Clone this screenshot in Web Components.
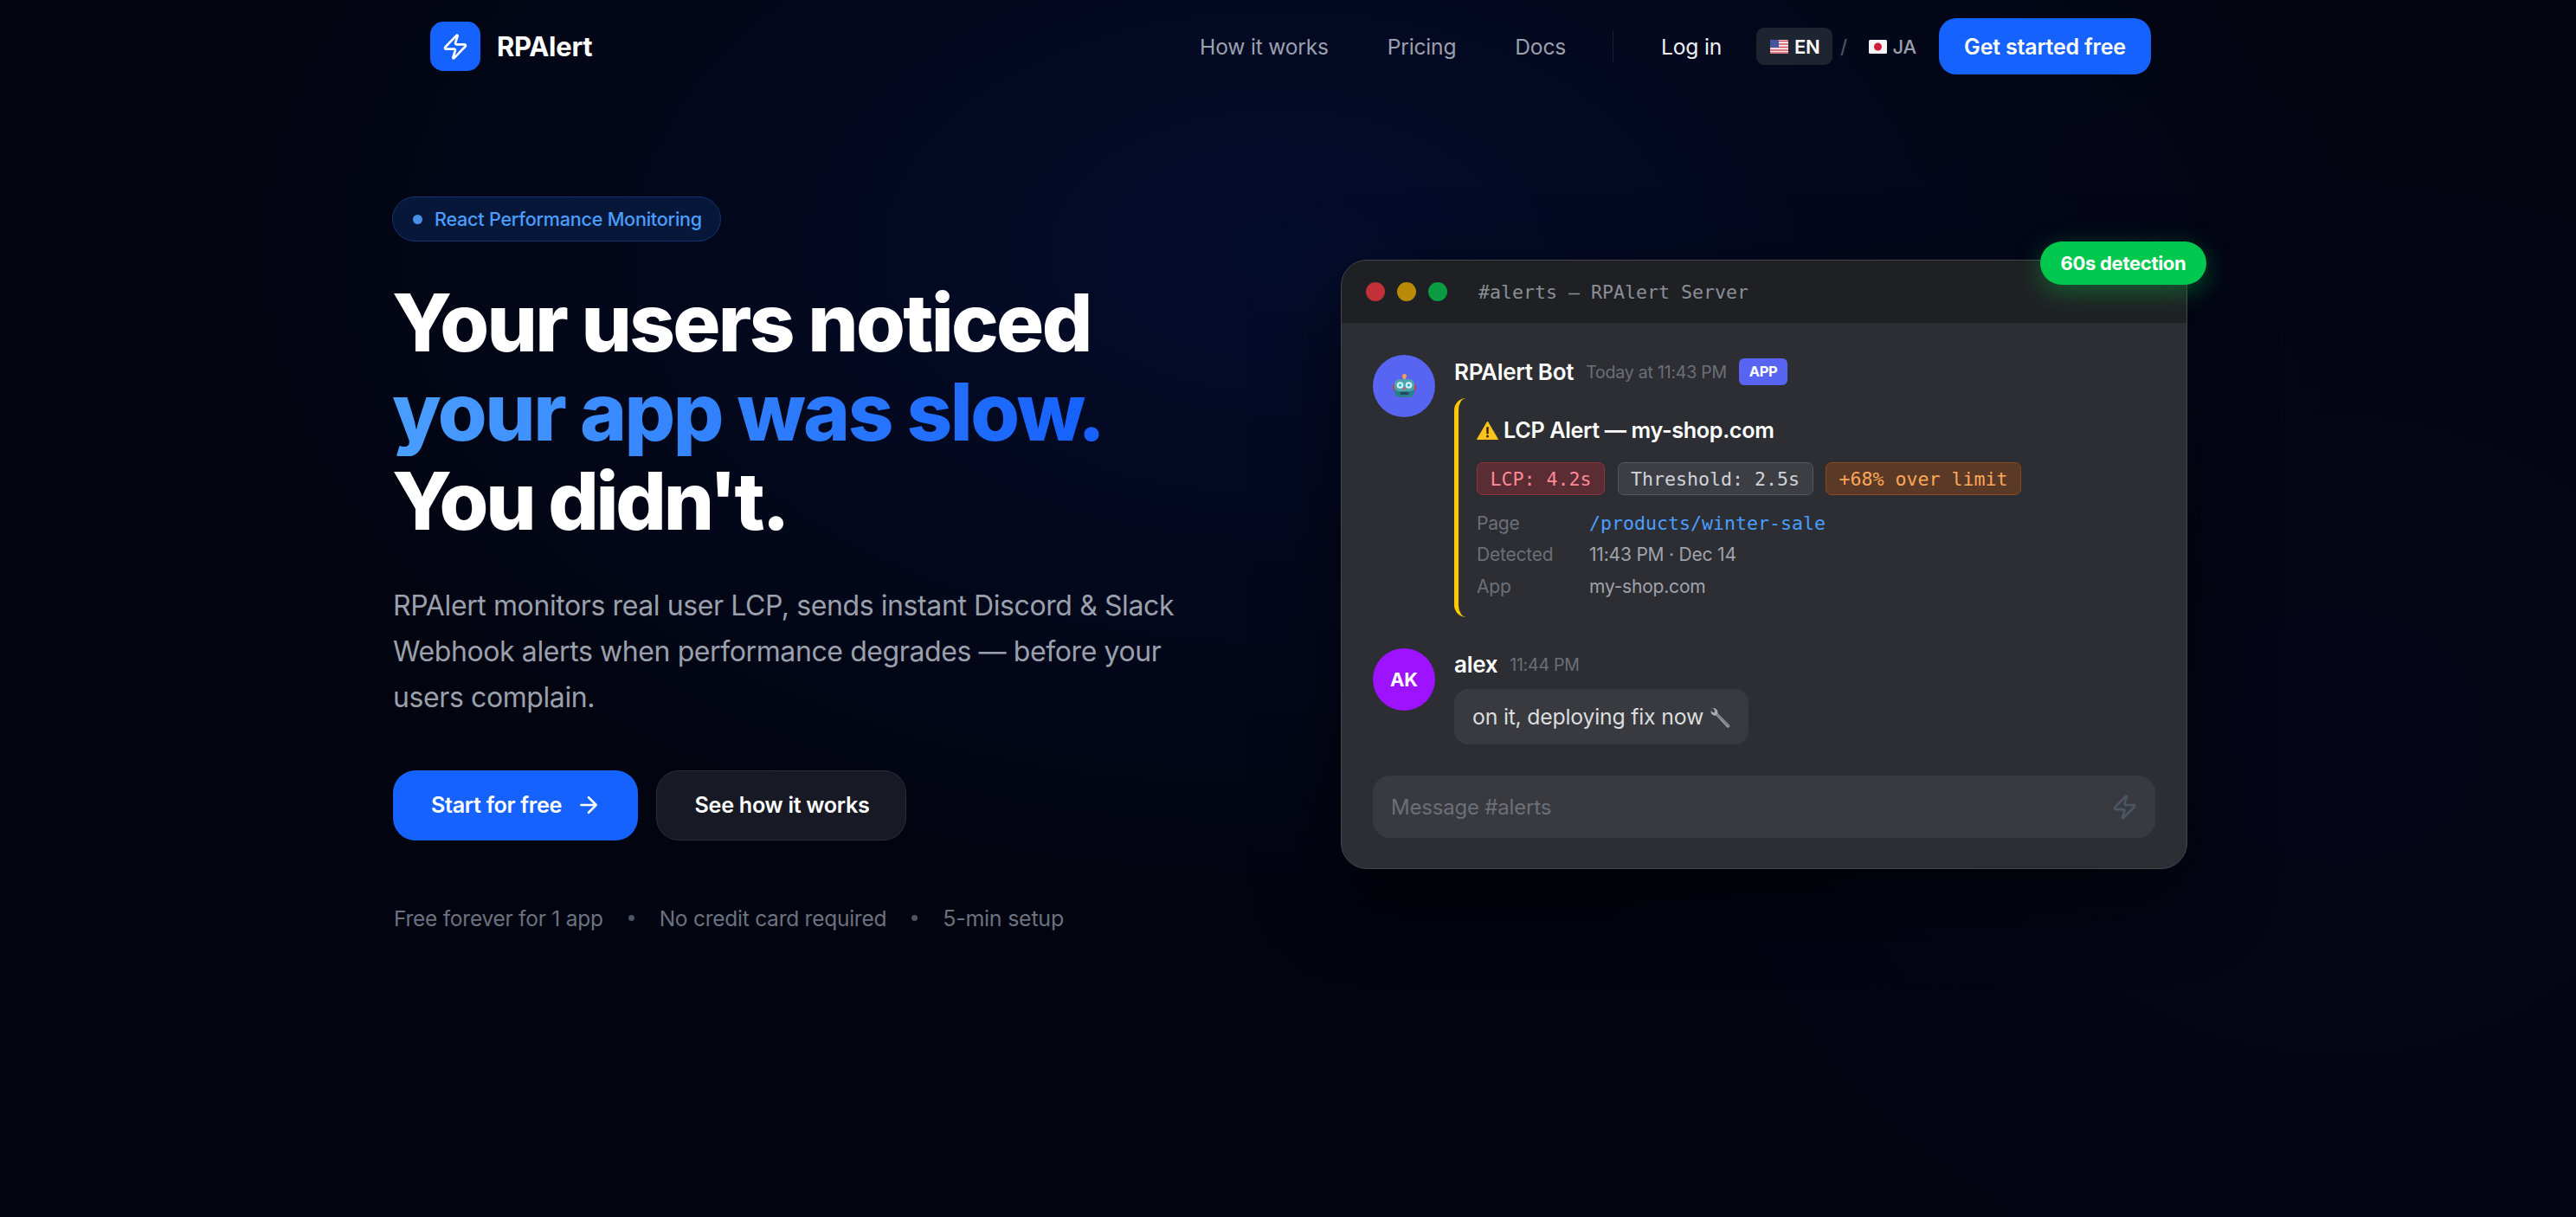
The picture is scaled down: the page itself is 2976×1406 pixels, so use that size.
<!DOCTYPE html>
<html lang="en"><head><meta charset="utf-8"><title>RPAlert</title>
<style>
html,body{margin:0;padding:0;height:100%}
body{min-height:1406px;overflow:hidden;color:#fff;font-family:Inter,"Noto Sans",sans-serif;
background:
 radial-gradient(1250px 760px at 1480px 290px,rgba(8,28,100,.34),rgba(8,30,110,0) 100%),
 radial-gradient(900px 800px at 2700px 850px,rgba(30,10,70,.16),rgba(30,10,70,0) 100%),
 #02040f;}
</style></head><body>
<rp-nav></rp-nav>
<rp-hero></rp-hero>
<script>
const ZAP='M4 14a1 1 0 0 1-.78-1.63l9.9-10.2a.5.5 0 0 1 .86.46l-1.92 6.02A1 1 0 0 0 13 10h7a1 1 0 0 1 .78 1.63l-9.9 10.2a.5.5 0 0 1-.86-.46l1.92-6.02A1 1 0 0 0 11 14z';
function def(name,html){customElements.define(name,class extends HTMLElement{constructor(){super();this.attachShadow({mode:'open'}).innerHTML=html;}})}

def('rp-nav',`<style>
:host{display:flex;align-items:center;height:107px;box-sizing:border-box;padding:0 491px 0 497px;font-size:24.6px;letter-spacing:-.2px}
.logo{display:flex;align-items:center;gap:19px;font-size:31px;font-weight:700;letter-spacing:-.3px}
.mark{width:58px;height:57px;border-radius:15px;background:#1662ff;display:flex;align-items:center;justify-content:center}
.links{margin-left:auto;display:flex;align-items:center;gap:68px;color:#9aa0ac}
.div{width:1px;height:36px;background:#1b2030;margin:0 55px 0 54px}
.login{color:#eef0f4}
.lang{display:flex;align-items:center;margin-left:40px;font-size:22px;font-weight:500;width:185px}
.opt{display:flex;align-items:center;gap:7px;height:43px;border-radius:9px;box-sizing:border-box}
.opt svg{width:21px;height:16px;display:block;flex:none}
.opt.on{background:#1e2430;color:#fff;font-weight:600;width:88px;padding-left:16px}
.opt.off{color:#9aa0ac;margin-left:auto}
.sl{color:#4b5563;margin-left:9px}
.cta{margin-left:26px;height:65px;width:245px;border-radius:20px;background:#1662ff;color:#fff;font-weight:600;display:flex;align-items:center;justify-content:center;font-size:25px}
svg.z{width:32px;height:32px;fill:none;stroke:#fff;stroke-width:2;stroke-linecap:round;stroke-linejoin:round}
</style>
<div class="logo"><div class="mark"><svg class="z" viewBox="0 0 24 24"><path d="${ZAP}"/></svg></div><span>RPAlert</span></div>
<div class="links"><span>How it works</span><span>Pricing</span><span>Docs</span></div>
<div class="div"></div><span class="login">Log in</span>
<div class="lang">
<div class="opt on"><svg viewBox="0 0 21 16"><rect width="21" height="16" rx="1.5" fill="#f3eef0"/><path d="M0 1.5h21M0 5h21M0 8.500h21M0 12h21M0 15h21" stroke="#d8505c" stroke-width="1.700"/><rect width="10" height="9" rx="1" fill="#45569f"/></svg><span>EN</span></div>
<span class="sl">/</span>
<div class="opt off"><svg viewBox="0 0 21 16"><rect width="21" height="16" rx="1.500" fill="#f4f4f4"/><circle cx="10.500" cy="8" r="4.500" fill="#d01c3a"/></svg><span>JA</span></div>
</div>
<div class="cta">Get started free</div>`);

def('rp-tag',`<style>:host{display:inline-flex;align-items:center;height:38px;box-sizing:border-box;padding:0 14.5px;border-radius:7px;border:1.5px solid var(--b);background:var(--g);color:var(--c);font:21.6px "DejaVu Sans Mono",monospace}</style><slot></slot>`);

def('rp-hero',`<style>
:host{display:grid;grid-template-columns:1096px 978px;padding:120px 0 0 453px;align-items:start}
.pill{display:inline-flex;align-items:center;gap:14px;height:52px;width:380px;box-sizing:border-box;padding-left:23px;border-radius:26px;background:#07173a;border:1.5px solid #143272;color:#4a9eff;font-size:21.6px;font-weight:500;letter-spacing:-.25px}
.pill i{width:11px;height:11px;border-radius:50%;background:#4a8fe6}
h1{margin:42px 0 0;font-size:92px;line-height:103.2px;font-weight:800;color:#fff}
h1 span{display:block}
h1 .l1{letter-spacing:-2.7px}
h1 .l2{letter-spacing:-2.5px;background:linear-gradient(90deg,#4a9eff,#1560ff);-webkit-background-clip:text;background-clip:text;color:transparent;width:max-content;padding-right:4px}
h1 .l3{letter-spacing:-3.3px}
p{margin:42px 0 0;width:920px;font-size:32px;line-height:53px;color:#9aa0ac;letter-spacing:-.4px;padding-left:1px}
.btns{display:flex;gap:21px;margin-top:58px;padding-left:1px}
.b{height:81px;box-sizing:border-box;border-radius:26px;display:flex;align-items:center;justify-content:center;font-size:25.200px;font-weight:600;letter-spacing:-.3px;color:#fff}
.b1{width:283px;background:#1662ff;gap:16px;padding-left:2px}
.b2{width:289px;background:#171a24;border:1.500px solid #2a2d38;padding-left:2px}
.b1 svg{width:30px;height:30px;fill:none;stroke:#fff;stroke-width:2;stroke-linecap:round;stroke-linejoin:round}
.f{display:flex;align-items:center;margin-top:75px;color:#6b7280;font-size:24.500px;letter-spacing:-.25px;padding-left:2px}
.f i{width:7px;height:7px;border-radius:50%;background:#4b5563;margin:0 29px}
.f .w{font-size:25px}
</style>
<div>
<div class="pill"><i></i><span>React Performance Monitoring</span></div>
<h1><span class="l1">Your users noticed</span><span class="l2">your app was slow.</span><span class="l3">You didn't.</span></h1>
<p>RPAlert monitors real user LCP, sends instant Discord &amp; Slack Webhook alerts when performance degrades — before your users complain.</p>
<div class="btns"><div class="b b1">Start for free<svg viewBox="0 0 24 24"><path d="M5 12h14M12 5l7 7-7 7"/></svg></div><div class="b b2">See how it works</div></div>
<div class="f"><span>Free forever for 1 app</span><i></i><span>No credit card required</span><i></i><span class="w">5-min setup</span></div>
</div>
<rp-window style="margin-top:73px"></rp-window>`);

def('rp-window',`<style>
:host{display:block;position:relative;width:978px;height:704px;box-sizing:border-box;border:1.5px solid #44464c;border-radius:30px;background:#2c2e33;box-shadow:0 30px 90px rgba(0,0,0,.55)}
.bar{height:72px;display:flex;align-items:center;padding-left:28px;background:#1f2023;border-bottom:1px solid #2a2b30;border-radius:29px 29px 0 0}
.bar i{width:22px;height:22px;border-radius:50%;margin-right:14px}
.bar span{margin-left:22px;font:21.6px "DejaVu Sans Mono",monospace;color:#8a8f98}
.badge{position:absolute;top:-22px;right:-23px;width:192px;height:50px;border-radius:25px;background:#00c84f;color:#fff;font-size:22px;font-weight:700;letter-spacing:-.3px;display:flex;align-items:center;justify-content:center;box-shadow:0 8px 30px rgba(0,200,79,.38)}
.body{padding:36px 36px 0}
.msg{display:flex;gap:22px}
.av{width:72px;height:72px;border-radius:50%;flex:none;display:flex;align-items:center;justify-content:center;font-weight:700;font-size:22px}
.av svg{width:27px;height:28px}
.name{display:flex;align-items:center;gap:14px;height:38px;font-size:26px;font-weight:600;letter-spacing:-.3px}
.time{font-size:19.500px;font-weight:400;color:#6d6f78;letter-spacing:-.2px;padding-top:2px}
.app{background:#5865f2;border-radius:6px;width:56px;height:31px;font-size:16.500px;font-weight:700;display:flex;align-items:center;justify-content:center}
.embed{margin-top:12px;width:790px;height:253px;box-sizing:border-box;border-left:5px solid #fec700;border-radius:14px 0 0 14px;padding:19px 0 0 21px}
.t{display:flex;align-items:center;gap:6px;font-size:25.200px;font-weight:600;letter-spacing:-.35px;height:36px}
.t svg{width:25px;height:22px;flex:none}
.tags{display:flex;gap:14.500px;margin-top:19px}
.kv{display:grid;grid-template-columns:130px auto;grid-auto-rows:36.500px;align-items:center;justify-content:start;margin-top:14px;font-size:21px;color:#a0a3ab;letter-spacing:-.2px}
.kv b{font-weight:400;color:#6d6f78}
.kv code{font:21.600px "DejaVu Sans Mono",monospace;color:#4a9eff;letter-spacing:0}
.m2{margin-top:36px}
.bub{margin-top:11px;display:inline-flex;align-items:center;gap:6px;height:64px;box-sizing:border-box;padding:0 19px 0 21px;background:#383a40;border-radius:16px;font-size:24.800px;color:#dcddde;letter-spacing:-.2px}
.bub svg{width:27px;height:27px}
.input{margin-top:36px;height:72px;border-radius:20px;background:#383a40;display:flex;align-items:center;justify-content:space-between;padding:0 20px 0 21px;font-size:24px;color:#6d6f78;letter-spacing:-.2px}
.input svg{width:31px;height:31px;fill:none;stroke:#4b5563;stroke-width:2;stroke-linecap:round;stroke-linejoin:round}
</style>
<div class="bar"><i style="background:#c2313a"></i><i style="background:#b98a05"></i><i style="background:#0a9b43"></i><span>#alerts — RPAlert Server</span></div>
<div class="badge">60s detection</div>
<div class="body">
<div class="msg"><div class="av" style="background:#5865f2"><svg viewBox="0 0 27 28" role="img" aria-label="robot"><rect x="12" y="3" width="3" height="4" fill="#c9a46a"/><circle cx="13.500" cy="2.500" r="2.500" fill="#f6a04c"/><rect x="0" y="12" width="3" height="7" rx="1.500" fill="#b4494a"/><rect x="24" y="12" width="3" height="7" rx="1.500" fill="#b4494a"/><rect x="2" y="6" width="23" height="21" rx="6" fill="#4fa3b0"/><path d="M2 14a5 5 0 0 0 5 6h13a5 5 0 0 0 5-6v7a6 6 0 0 1-6 6H8a6 6 0 0 1-6-6z" fill="#2d7d8e"/><circle cx="8.500" cy="13" r="3.800" fill="#d8f3f7"/><circle cx="18.500" cy="13" r="3.800" fill="#d8f3f7"/><circle cx="8.500" cy="13" r="1.800" fill="#2fb6d6"/><circle cx="18.500" cy="13" r="1.800" fill="#2fb6d6"/><path d="M13.500 15l2 3h-4z" fill="#e2574c"/><rect x="8.500" y="21" width="10" height="3" rx="1" fill="#1f4d59"/></svg></div><div>
<div class="name"><span>RPAlert Bot</span><span class="time">Today at 11:43 PM</span><span class="app">APP</span></div>
<div class="embed"><div class="t"><svg viewBox="0 0 25 22" role="img" aria-label="warning"><path d="M12.500 1L24.500 21.500H.5z" fill="#fcc21b" stroke="#fcc21b" stroke-linejoin="round"/><rect x="11.300" y="7" width="2.400" height="8.500" rx="1.100" fill="#2b2214"/><circle cx="12.500" cy="18" r="1.500" fill="#2b2214"/></svg><span>LCP Alert — my-shop.com</span></div>
<div class="tags"><rp-tag style="--g:#5a2c33;--b:#8d3340;--c:#ff8a95">LCP: 4.2s</rp-tag><rp-tag style="--g:#3c3e44;--b:#55575d;--c:#d0d3d9">Threshold: 2.5s</rp-tag><rp-tag style="--g:#5a3a26;--b:#8a4a1e;--c:#ffa657">+68% over limit</rp-tag></div>
<div class="kv"><b>Page</b><code>/products/winter-sale</code><b>Detected</b><span>11:43 PM · Dec 14</span><b>App</b><span>my-shop.com</span></div>
</div></div></div>
<div class="msg m2"><div class="av" style="background:#9d13ff">AK</div><div>
<div class="name" style="height:36px"><span>alex</span><span class="time">11:44 PM</span></div>
<div class="bub"><span>on it, deploying fix now</span><svg viewBox="0 0 27 27" role="img" aria-label="wrench"><path d="M3 3.500a5.500 5.500 0 0 1 6.500 1.500 5 5 0 0 1 .9 4L24 22.500a2 2 0 0 1-2.800 2.800L8.500 11.500a5 5 0 0 1-5-1.500A5.500 5.500 0 0 1 2.500 6l3 2.500 2-1.500-2-3.500z" fill="#a8abb2"/><path d="M10.400 9L24 22.500a2 2 0 0 1-1.500 2.400L9 11z" fill="#7d8088"/></svg></div>
</div></div>
<div class="input"><span>Message #alerts</span><svg viewBox="0 0 24 24"><path d="${ZAP}"/></svg></div>
</div>`);
</script>
</body></html>
